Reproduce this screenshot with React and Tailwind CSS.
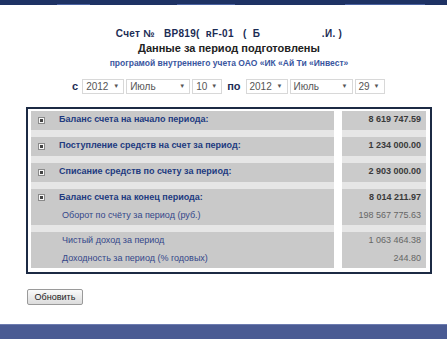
const rows = [
  {
    lines: [{ label: "Баланс счета на начало периода:", value: "8 619 747.59", bold: true }],
  },
  {
    lines: [{ label: "Поступление средств на счет за период:", value: "1 234 000.00", bold: true }],
  },
  {
    lines: [{ label: "Списание средств по счету за период:", value: "2 903 000.00", bold: true }],
  },
  {
    lines: [
      { label: "Баланс счета на конец периода:", value: "8 014 211.97", bold: true },
      { label: "Оборот по счёту за период (руб.)", value: "198 567 775.63" },
    ],
  },
  {
    lines: [
      { label: "Чистый доход за период", value: "1 063 464.38" },
      { label: "Доходность за период (% годовых)", value: "244.80" },
    ],
    noIcon: true,
  },
];

const Select = ({ value, width }) => (
  <div
    className={`flex items-center justify-between h-[15px] border border-[#d8d8d8] bg-white pl-[3px] pr-[4px] text-[10px] text-[#555] ${width}`}
  >
    <span>{value}</span>
    <span className="text-[6px] text-[#555]">▼</span>
  </div>
);

const PlusBox = () => (
  <div className="w-[7px] h-[7px] border border-[#8a8a8a] bg-[#f6f6f6] flex items-center justify-center">
    <div className="w-[3px] h-[3px] bg-[#444]" />
  </div>
);

export default function App() {
  return (
    <div className="w-[447px] h-[339px] bg-white flex flex-col font-['Liberation_Sans',Arial,sans-serif] overflow-hidden">
      {/* top bar */}
      <div className="h-[5px] bg-[#1e3264] flex items-end">
        <div className="ml-[57px] w-[33px] h-px bg-[#4a62a0]" />
        <div className="ml-[87px] w-[58px] h-px bg-[#4a62a0]" />
        <div className="ml-[110px] w-[80px] h-px bg-[#4a62a0]" />
      </div>

      {/* header */}
      <div className="w-[458px] flex flex-col items-center mt-[22px]">
        <div className="text-[10px] font-bold text-[#1c2c55] leading-[13px] whitespace-pre tracking-[0.3px]">
          {"Счет №   BP819(  ʀF-01   (  Б                    .И. )"}
        </div>
        <div className="text-[11px] font-bold text-[#222] leading-[14px] mt-[1px]">
          Данные за период подготовлены
        </div>
        <div className="text-[8.5px] font-bold text-[#3a56a0] leading-[10px] mt-[3px]">
          програмой внутреннего учета ОАО «ИК «Ай Ти «Инвест»
        </div>
      </div>

      {/* period selects */}
      <div className="flex items-center gap-[2px] ml-[72px] mt-[10px]">
        <span className="text-[11px] font-bold text-[#1c2c55] mr-[2px]">с</span>
        <Select value="2012" width="w-[42px]" />
        <Select value="Июль" width="w-[64px]" />
        <Select value="10" width="w-[30px]" />
        <span className="text-[11px] font-bold text-[#1c2c55] mx-[3px]">по</span>
        <Select value="2012" width="w-[42px]" />
        <Select value="Июль" width="w-[63px]" />
        <Select value="29" width="w-[30px]" />
      </div>

      {/* table */}
      <div className="ml-[26px] mt-[12px] w-[406px] border-2 border-[#1c2a44] bg-white pt-[2px] pb-[4px] pl-[3px] pr-[4px] flex flex-col">
        {rows.map((row, i) => (
          <div key={i} className="flex flex-col">
            {i > 0 && (
              <div className="flex gap-[8px] h-[7px]">
                <div className="w-[303px] bg-[#e6e6e6]" />
                <div className="w-[84px] bg-[#e6e6e6]" />
              </div>
            )}
            <div className="flex gap-[8px]">
              <div className="w-[303px] bg-[#c9c9c9] flex flex-col">
                {row.lines.map((l, j) => (
                  <div
                    key={j}
                    className={`flex items-center ${row.lines.length > 1 ? "h-[18px]" : "h-[19px]"}`}
                  >
                    <div className="w-[28px] flex justify-end pr-[14px]">
                      {j === 0 && !row.noIcon && <PlusBox />}
                    </div>
                    <span
                      className={
                        l.bold
                          ? "text-[9px] font-bold text-[#213a80]"
                          : "text-[9px] ml-[3px] text-[#34478a]"
                      }
                    >
                      {l.label}
                    </span>
                  </div>
                ))}
              </div>
              <div className="w-[84px] bg-[#cbcbcb] flex flex-col">
                {row.lines.map((l, j) => (
                  <div
                    key={j}
                    className={`flex items-center justify-end pr-[5px] ${row.lines.length > 1 ? "h-[18px]" : "h-[19px]"}`}
                  >
                    <span
                      className={
                        l.bold ? "text-[9px] font-bold text-[#3a3a3a]" : "text-[9px] text-[#666]"
                      }
                    >
                      {l.value}
                    </span>
                  </div>
                ))}
              </div>
            </div>
          </div>
        ))}
      </div>

      {/* refresh */}
      <div className="ml-[27px] mt-[9px]">
        <button className="w-[56px] h-[16px] border border-[#9a9a9a] rounded-[2px] bg-gradient-to-b from-[#fafafa] to-[#dcdcdc] text-[9px] text-[#222] leading-none">
          Обновить
        </button>
      </div>

      <div className="flex-1" />
      <div className="h-[15px] bg-[#4a5b93] border-t border-[#6d7cb0]" />
    </div>
  );
}
